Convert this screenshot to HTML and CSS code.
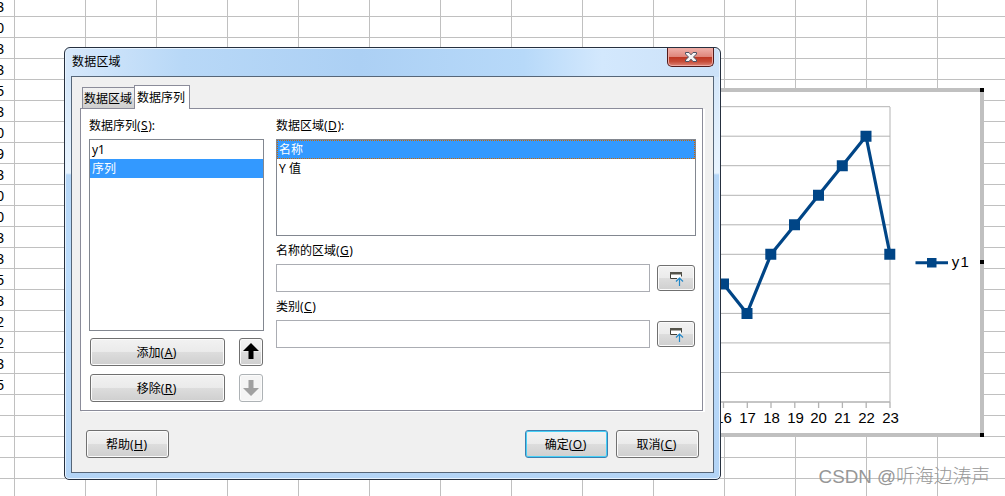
FILE: index.html
```html
<!DOCTYPE html>
<html lang="zh-CN">
<head>
<meta charset="utf-8">
<title>数据区域</title>
<link rel="stylesheet" href="styles.css">
</head>
<body>
<main class="desktop">
  <div class="column">
    <span>3</span><span>0</span><span>3</span><span>3</span><span>5</span><span>3</span><span>0</span><span>9</span><span>3</span><span>0</span><span>0</span><span>3</span><span>3</span><span>5</span><span>3</span><span>2</span><span>2</span><span>3</span><span>5</span>
  </div>

  <svg class="chart" width="384" height="349" viewBox="600 88 384 349">
    <rect x="600" y="88" width="384" height="349" fill="#c0c0c0"/>
    <rect x="600" y="92" width="380" height="341" fill="#fff"/>
    <g stroke="#b3b3b3" fill="none">
      <path d="M600 106.7H890M600 136.2H890M600 165.7H890M600 195.3H890M600 224.8H890M600 254.3H890M600 283.9H890M600 313.4H890M600 342.9H890M600 372.5H890"/>
      <path d="M600 402H890M723.5 402v6M747.3 402v6M771 402v6M794.8 402v6M818.6 402v6M842.4 402v6M866.2 402v6M890 402v6" stroke-width="1.3"/>
      <path d="M890 107V402"/>
    </g>
    <path d="M723.5 284L747 313.4L771 254.3L795 224.8L818.5 195.3L842.3 165.7L866 136.2L890 254.3" fill="none" stroke="#004586" stroke-width="3.2" stroke-linejoin="round"/>
    <path d="M718 278.500h11v11h-11zM741.5 308h11v11h-11zM765.3 248.700h11v11h-11zM789 219.300h11v11h-11zM813 189.800h11v11h-11zM836.800 160.300h11v11h-11zM860.500 130.800h11v11h-11zM884.300 248.700h11v11h-11z" fill="#004586"/>
    <path d="M915.500 262.800H948" stroke="#004586" stroke-width="3"/>
    <rect x="927" y="258" width="9.500" height="9.500" fill="#004586"/>
    <g class="axis">
      <text x="723.500" y="423">16</text><text x="747.500" y="423">17</text><text x="771.500" y="423">18</text><text x="795.500" y="423">19</text><text x="818.500" y="423">20</text><text x="842.500" y="423">21</text><text x="866.500" y="423">22</text><text x="890.500" y="423">23</text>
      <text x="960.300" y="267" textLength="17">y1</text>
    </g>
    <path d="M980 88h4v4h-4zM980 260h4v4h-4zM980 433h4v4h-4z" fill="#000"/>
  </svg>

  <div class="watermark">CSDN @听海边涛声</div>

  <section class="dialog">
    <header class="titlebar">
      <h1>数据区域</h1>
      <button class="close" aria-label="关闭"><svg width="14" height="12" viewBox="0 0 14 12"><path d="M1.500 1.500h3.500l2 2.300 2-2.300h3.500v1.500L9.500 6l3 3v1.500H9L7 8.200 5 10.500H1.500V9l3-3-3-3z" fill="#f4f4f4" stroke="#4c5263" stroke-width="1"/></svg></button>
    </header>
    <div class="client">
      <nav class="tabs"><span class="tab">数据区域</span><span class="tab active">数据序列</span></nav>
      <div class="panel">
        <div class="series">
          <div class="label">数据序列(<u>S</u>):</div>
          <div class="list tall"><div class="row">y1</div><div class="row selected">序列</div></div>
          <div class="actions">
            <button class="btn">添加(<u>A</u>)</button>
            <button class="btn arrow"><svg width="16" height="17" viewBox="0 0 16 17"><path d="M8 0L16 8H10.500V16H5.500V8H0z" fill="#000"/></svg></button>
            <button class="btn">移除(<u>R</u>)</button>
            <button class="btn arrow disabled"><svg width="16" height="17" viewBox="0 0 16 17"><path d="M8 17L16 9H10.500V1H5.500V9H0z" fill="#a0a0a0"/></svg></button>
          </div>
        </div>
        <div class="ranges">
          <div class="label">数据区域(<u>D</u>):</div>
          <div class="list short"><div class="row selected focus">名称</div><div class="row">Y 值</div></div>
          <div class="label field-label">名称的区域(<u>G</u>)</div>
          <div class="field"><span class="input"></span><button class="btn pick"><svg width="14" height="14" viewBox="0 0 14 14"><path d="M7 6.500H.5v-6h11v4" fill="#fff" stroke="#403f38"/><path d="M0 0h12v2.500H0z" fill="#55544b"/><path d="M9.500 14V6M6 9.500L9.500 6 13 9.500" fill="none" stroke="#2388c8" stroke-width="1.2"/></svg></button></div>
          <div class="label field-label">类别(<u>C</u>)</div>
          <div class="field"><span class="input"></span><button class="btn pick"><svg width="14" height="14" viewBox="0 0 14 14"><path d="M7 6.500H.5v-6h11v4" fill="#fff" stroke="#403f38"/><path d="M0 0h12v2.500H0z" fill="#55544b"/><path d="M9.500 14V6M6 9.500L9.500 6 13 9.500" fill="none" stroke="#2388c8" stroke-width="1.2"/></svg></button></div>
        </div>
      </div>
      <footer class="footer">
        <button class="btn">帮助(<u>H</u>)</button>
        <button class="btn default">确定(<u>O</u>)</button>
        <button class="btn">取消(<u>C</u>)</button>
      </footer>
    </div>
  </section>
</main>
</body>
</html>
```

FILE: styles.css
```css
* { box-sizing: border-box; }
body { margin: 0; font: 12px/18px "Noto Sans", "Noto Sans CJK SC", sans-serif; color: #000; }
h1 { margin: 0; font-size: inherit; font-weight: 400; }
button { font: inherit; color: inherit; padding: 0; margin: 0; }
u { text-decoration: none; box-shadow: inset 0 -1px #000; display: inline-block; line-height: 13px; padding: 0 .5px; }
svg { display: block; }

.desktop {
  position: relative; width: 1005px; height: 496px; overflow: hidden;
  background:
    repeating-linear-gradient(90deg, #c0c0c0 0 1px, transparent 1px 71px) 14px 0 / 100% 100% no-repeat,
    linear-gradient(#c0c0c0 0 1px, transparent 1px) 0 16px / 100% 21px,
    #fff;
}
.column { width: 4px; display: flex; flex-direction: column; align-items: flex-end; font: 14px/21px "Liberation Sans", sans-serif; margin-top: -3px; }
.column span { height: 21px; }

/* floating layers over the sheet */
.chart { position: absolute; left: 600px; top: 88px; }
.axis { font: 15px "Liberation Sans", sans-serif; text-anchor: middle; }
.watermark { position: absolute; right: 15px; bottom: 5px; font: 300 18.8px/28px "Liberation Sans", "Noto Sans CJK SC", sans-serif; color: #979797; white-space: nowrap; }
.dialog {
  position: absolute; left: 64px; top: 47px; width: 657px; height: 433px;
  border: 1px solid #26303f; border-radius: 6px 6px 5px 5px; padding: 0 6px 6px;
  box-shadow: inset 0 0 0 1px #e7f3ff;
  background:
    linear-gradient(90deg, #d6e8fb, #b8d8f7 18%, #acd0f4 45%, #b7d9f9 70%, #d3e8fd 82%, #cbe1f8) 0 0 / 100% 29px no-repeat,
    linear-gradient(#cfe3f8, #e8f4ff 125px, #b5d6f7 127px, #bbdcfc 220px, #b3d4f6);
}
.titlebar { height: 28px; display: flex; justify-content: space-between; align-items: flex-start; }
.titlebar h1 { padding-top: 5px; margin-left: 1px; letter-spacing: .2px; }
.close {
  width: 47px; height: 19px; display: grid; place-items: center; border: 1px solid #521c1c; border-top: 0; border-radius: 0 0 5px 5px;
  box-shadow: inset 0 0 0 1px #efaaa3; background: linear-gradient(#efb1aa, #df867b 48%, #bd3521 50%, #c64c38 75%, #dc8577);
}
.client { height: 397px; border: 1px solid #566678; background: #f0f0f0; padding: 8px 10px 0 8px; }
.tabs { display: flex; align-items: flex-end; height: 24px; padding-left: 2px; position: relative; z-index: 1; margin-bottom: -1px; }
.tab { width: 52px; height: 22px; border: 1px solid #8b8c9a; border-right: 0; padding: 2px 0 0 1px; background: linear-gradient(#f2f2f2, #e9e9e9 48%, #dbdbdb 52%, #cfcfcf); white-space: nowrap; }
.tab.active { width: 56px; height: 24px; border: 1px solid #8b8c9a; border-bottom: 0; background: #fff; padding: 3px 0 0 2px; }
.panel { height: 303px; width: 623px; border: 1px solid #8b8c9a; background: #fff; box-shadow: 2px 1px #fff; padding: 8px 6px 0 8px; display: flex; gap: 12px; }
.series { width: 175px; }
.ranges { width: 420px; }
.label { height: 22px; white-space: nowrap; }
.list { border: 1px solid #828790; background: #fff; }
.tall { height: 192px; }
.short { height: 97px; }
.row { height: 19px; padding-left: 2px; line-height: 19px; }
.row.selected { background: #3399ff; color: #fff; }
.row.focus {
  background:
    repeating-linear-gradient(90deg, #cc6600 0 1px, transparent 1px 2px) 0 0 / 100% 1px no-repeat,
    repeating-linear-gradient(90deg, #cc6600 0 1px, transparent 1px 2px) 0 100% / 100% 1px no-repeat,
    repeating-linear-gradient(#cc6600 0 1px, transparent 1px 2px) 0 0 / 1px 100% no-repeat,
    repeating-linear-gradient(#cc6600 0 1px, transparent 1px 2px) 100% 0 / 1px 100% no-repeat,
    #3399ff;
}
.btn {
  display: flex; align-items: center; justify-content: center; border: 1px solid #707070; border-radius: 3px; padding: 1px 2px 0 0;
  box-shadow: inset 0 0 0 1px #fbfbfb; background: linear-gradient(#f2f2f2, #ebebeb 48%, #dddddd 50%, #cfcfcf); white-space: nowrap;
}
.btn.arrow { padding: 0 0 1px; }
.btn.disabled { border-color: #adb2b5; background: #f4f4f4; }
.btn.default { border-color: #3c7fb1; box-shadow: inset 0 0 0 1px #46d0f7; }
.actions { display: grid; grid-template-columns: 135px 24px; grid-auto-rows: 28px; gap: 8px 14px; padding: 7px 0 0 1px; }
.field-label { height: 22px; }
.ranges .list + .field-label { margin-top: 6px; }
.field { display: flex; gap: 7px; height: 28px; align-items: center; }
.field + .field-label { margin-top: 6px; }
.input { width: 374px; height: 28px; border: 1px solid #abadb3; background: #fff; }
.btn.pick { width: 38px; height: 26px; padding: 2px 0 0 2px; }
.footer { display: flex; gap: 8px; padding: 19px 4px 0 6px; }
.footer .btn { width: 83px; height: 28px; }
.footer .default { margin-left: auto; }
```
